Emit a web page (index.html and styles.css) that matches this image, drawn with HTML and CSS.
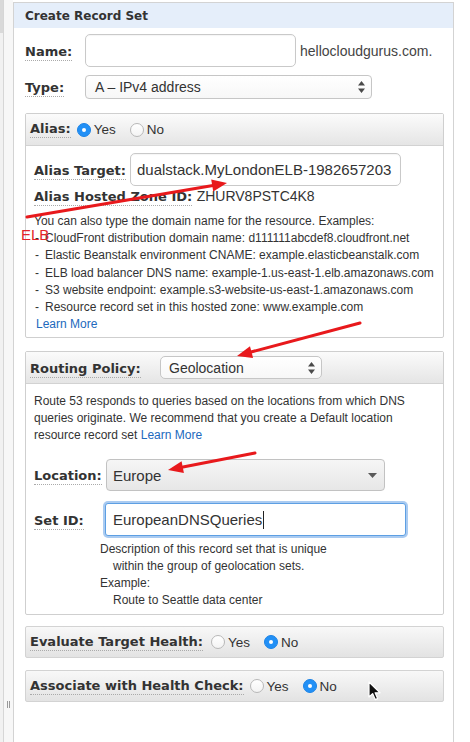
FILE: index.html
```html
<!DOCTYPE html>
<html>
<head>
<meta charset="utf-8">
<title>Create Record Set</title>
<link rel="stylesheet" href="styles.css">
</head>
<body>
<div class="page">
  <div class="gutter">
    <div class="gutter-edge"><div class="gutter-edge-top"></div></div>
    <div class="gutter-main"><span class="grip"></span></div>
  </div>
  <div class="panel">
    <div class="panel-head">Create Record Set</div>
    <div class="panel-body">
      <div class="row row-name">
        <div class="cell w60"><span class="lbl">Name:</span></div>
        <div class="input name-input"></div>
        <span class="suffix">hellocloudgurus.com.</span>
      </div>
      <div class="row row-type">
        <div class="cell w60"><span class="lbl">Type:</span></div>
        <div class="select type-select">
          <span>A – IPv4 address</span>
          <svg class="updown" width="7" height="12" viewBox="0 0 7 12"><path d="M3.5 0 L7 4.5 H0 Z M0 7.5 H7 L3.5 12 Z" fill="#4a4a4a"/></svg>
        </div>
      </div>

      <section class="box alias-box">
        <div class="box-head">
          <span class="lbl">Alias:</span>
          <span class="radio on first"></span><span class="rtext">Yes</span>
          <span class="radio"></span><span class="rtext">No</span>
        </div>
        <div class="box-body">
          <div class="row alias-row">
            <div class="cell w96"><span class="lbl">Alias Target:</span></div>
            <div class="input alias-input">dualstack.MyLondonELB-1982657203</div>
          </div>
          <div class="zone"><span class="lbl">Alias Hosted Zone ID:</span> <span class="zone-val">ZHURV8PSTC4K8</span></div>
          <div class="help">
            <div>You can also type the domain name for the resource. Examples:</div>
            <ul class="examples">
              <li><span class="dash">-</span>CloudFront distribution domain name: d111111abcdef8.cloudfront.net</li>
              <li><span class="dash">-</span>Elastic Beanstalk environment CNAME: example.elasticbeanstalk.com</li>
              <li><span class="dash">-</span>ELB load balancer DNS name: example-1.us-east-1.elb.amazonaws.com</li>
              <li><span class="dash">-</span>S3 website endpoint: example.s3-website-us-east-1.amazonaws.com</li>
              <li><span class="dash">-</span>Resource record set in this hosted zone: www.example.com</li>
            </ul>
            <a class="link learn1">Learn More</a>
          </div>
        </div>
      </section>

      <section class="box routing-box">
        <div class="box-head">
          <div class="cell w130"><span class="lbl">Routing Policy:</span></div>
          <div class="select policy-select">
            <span>Geolocation</span>
            <svg class="updown" width="7" height="12" viewBox="0 0 7 12"><path d="M3.5 0 L7 4.5 H0 Z M0 7.5 H7 L3.5 12 Z" fill="#4a4a4a"/></svg>
          </div>
        </div>
        <div class="box-body routing-body">
          <div class="desc">Route 53 responds to queries based on the locations from which DNS queries originate. We recommend that you create a Default location resource record set <a class="link">Learn More</a></div>
          <div class="row loc-row">
            <div class="cell w72"><span class="lbl">Location:</span></div>
            <div class="dropdown">
              <span>Europe</span>
              <svg width="9" height="5" viewBox="0 0 9 5"><path d="M0 0 H9 L4.5 5 Z" fill="#5a5a5a"/></svg>
            </div>
          </div>
          <div class="row setid-row">
            <div class="cell w71"><span class="lbl">Set ID:</span></div>
            <div class="input focus-input">EuropeanDNSQueries<span class="caret"></span></div>
          </div>
          <div class="setid-help">
            <div>Description of this record set that is unique</div>
            <div class="ind">within the group of geolocation sets.</div>
            <div>Example:</div>
            <div class="ind">Route to Seattle data center</div>
          </div>
        </div>
      </section>

      <div class="bar eval-bar">
        <span class="lbl">Evaluate Target Health:</span>
        <span class="radio first"></span><span class="rtext">Yes</span>
        <span class="radio on"></span><span class="rtext">No</span>
      </div>
      <div class="bar assoc-bar">
        <span class="lbl">Associate with Health Check:</span>
        <span class="radio first"></span><span class="rtext">Yes</span>
        <span class="radio on"></span><span class="rtext">No</span>
      </div>
    </div>
  </div>
</div>

<span class="elb-note">ELB</span>

<svg class="annotations" width="470" height="742" viewBox="0 0 470 742">
  <g stroke="#e8191c" stroke-width="3" stroke-linecap="round" fill="none">
    <line x1="27" y1="217" x2="213" y2="185.5"/>
    <line x1="360" y1="323" x2="251" y2="352"/>
    <line x1="255" y1="453" x2="183" y2="467"/>
  </g>
  <g fill="#e8191c">
    <polygon points="227,183 213.2,191.4 211.2,179.6"/>
    <polygon points="237,356 253.1,357.9 250.0,346.3"/>
    <polygon points="168,470 183.9,473.0 181.6,461.2"/>
  </g>
</svg>

<svg class="cursor" width="14" height="21" viewBox="0 0 14 21">
  <path d="M1 1 L1 16 L4.6 12.6 L7.2 18.6 L9.6 17.6 L7.1 11.8 L12 11.8 Z" fill="#111" stroke="#fff" stroke-width="1.2" stroke-linejoin="round"/>
</svg>
</body>
</html>
```

FILE: styles.css
```css
* { box-sizing: border-box; }

html, body {
  margin: 0;
  padding: 0;
}

body {
  width: 470px;
  height: 742px;
  overflow: hidden;
  position: relative;
  background: #fff;
  font-family: "Liberation Sans", Arial, sans-serif;
  color: #333;
}

.page {
  display: flex;
  height: 742px;
}

/* left gutter */
.gutter {
  width: 13px;
  flex: none;
  display: flex;
}
.gutter-edge {
  width: 3px;
  background: #f1f1f1;
}
.gutter-edge-top {
  height: 33px;
  background: #d9d9d9;
}
.gutter-main {
  flex: 1;
  border-left: 1px solid #d6d6d6;
  background: #f7f7f7;
  display: flex;
  flex-direction: column;
  justify-content: flex-end;
  align-items: center;
  padding-bottom: 34px;
}
.grip {
  width: 3px;
  height: 7px;
  border-left: 1px solid #999;
  border-right: 1px solid #999;
}

/* panel */
.panel {
  width: 441px;
  flex: none;
  margin-top: 2px;
  border: 1px solid #d3d3d3;
  border-bottom: none;
}
.panel-head {
  height: 25px;
  background: #e5eefa;
  padding-left: 11px;
  font: bold 12px "DejaVu Sans", sans-serif;
  line-height: 27px;
  color: #333;
}
.panel-body {
  padding: 0 9px 0 11px;
}

.row {
  display: flex;
  align-items: center;
}
.cell { flex: none; }
.w60 { width: 60px; }
.w96 { width: 96px; }
.w130 { width: 130px; }
.w72 { width: 72px; }
.w71 { width: 71px; }

.lbl {
  font: bold 13px "DejaVu Sans", sans-serif;
  color: #333;
  line-height: 15px;
  padding-bottom: 1px;
  border-bottom: 1px dotted #aaa;
  white-space: nowrap;
}

.input {
  background: #fff;
  border: 1px solid #c9c9c9;
  border-radius: 5px;
  box-shadow: inset 0 1px 1px rgba(0,0,0,0.04);
  font-size: 15px;
  color: #333;
  display: flex;
  align-items: center;
  white-space: nowrap;
  overflow: hidden;
}

.row-name { margin-top: 6px; }
.name-input { width: 211px; height: 33px; }
.suffix {
  margin-left: 4px;
  font-size: 14px;
  color: #444;
}

.row-type { margin-top: 8px; }
.select {
  display: flex;
  align-items: center;
  justify-content: space-between;
  background: linear-gradient(#fff, #f7f7f7);
  border: 1px solid #c6c6c6;
  border-radius: 4px;
  font-size: 14px;
  color: #333;
  padding: 0 6px 0 9px;
}
.type-select { width: 287px; height: 24px; }

/* boxes */
.box {
  border: 1px solid #cfcfcf;
  border-radius: 2px;
  background: #fff;
}
.box-head {
  height: 32px;
  display: flex;
  align-items: center;
  padding-left: 4px;
  background: linear-gradient(#fbfbfb, #e5e5e5);
  border-bottom: 1px solid #d2d2d2;
}
.box-body {
  padding: 7px 8px 4px 8px;
}

.alias-box { margin-top: 14px; }

.radio {
  width: 14px;
  height: 14px;
  border-radius: 50%;
  flex: none;
  background: linear-gradient(#fff, #f3f3f3);
  border: 1px solid #b8b8b8;
  margin-left: 14px;
  display: flex;
  align-items: center;
  justify-content: center;
}
.radio.first { margin-left: 6px; }
.radio.on {
  background: #2290f6;
  border-color: #1c83e6;
}
.radio.on::after {
  content: "";
  width: 4px;
  height: 4px;
  border-radius: 50%;
  background: #fff;
}
.rtext {
  margin-left: 3px;
  font-size: 13.5px;
  color: #333;
}

.alias-input {
  width: 271px;
  height: 33px;
  padding-left: 6px;
}

.zone {
  line-height: 20px;
  height: 20px;
  white-space: nowrap;
}
.zone-val {
  font-size: 14px;
  color: #333;
}

.help {
  margin-top: 7px;
  font-size: 12px;
  line-height: 17.2px;
  color: #333;
}
.examples {
  list-style: none;
  margin: 0;
  padding: 0;
}
.examples li { white-space: nowrap; }
.dash {
  display: inline-block;
  width: 11px;
  padding-left: 1px;
}
.link {
  color: #2169bd;
  text-decoration: none;
}
.learn1 { padding-left: 2px; }

/* routing */
.routing-box { margin-top: 13px; }
.policy-select {
  width: 162px;
  height: 23px;
  border-radius: 5px;
  padding-left: 8px;
}
.routing-body {
  padding: 9px 8px 5px 8px;
}
.desc {
  font-size: 12px;
  line-height: 17px;
  color: #333;
}
.loc-row { margin-top: 15px; }
.dropdown {
  width: 279px;
  height: 32px;
  display: flex;
  align-items: center;
  justify-content: space-between;
  padding: 0 7px 0 6px;
  border: 1px solid #c2c2c2;
  border-radius: 4px;
  background: linear-gradient(#f6f6f6, #e7e7e7);
  font-size: 15px;
  color: #333;
}
.setid-row { margin-top: 12px; }
.focus-input {
  width: 301px;
  height: 33px;
  padding-left: 7px;
  border: 1px solid #5d9fe3;
  border-radius: 3px;
  box-shadow: 0 0 0 2px rgba(100,160,230,0.55);
}
.caret {
  display: inline-block;
  width: 1px;
  height: 18px;
  background: #222;
  margin-left: 1px;
}
.setid-help {
  margin: 5px 0 0 66px;
  font-size: 12px;
  line-height: 17px;
  color: #333;
}
.setid-help .ind { padding-left: 13px; }

/* bars */
.bar {
  height: 32px;
  display: flex;
  align-items: center;
  padding-left: 4px;
  border: 1px solid #d3d3d3;
  border-radius: 2px;
  background: linear-gradient(#f8f8f8, #e3e3e3);
}
.eval-bar { margin-top: 11px; }
.eval-bar .radio.first { margin-left: 8px; }
.assoc-bar { margin-top: 12px; }

/* overlays */
.annotations {
  position: absolute;
  left: 0;
  top: 0;
  pointer-events: none;
}
.elb-note {
  position: absolute;
  left: 21px;
  top: 226px;
  font-size: 15px;
  color: #e3232a;
  font-family: "Liberation Sans", Arial, sans-serif;
}
.cursor {
  position: absolute;
  left: 368px;
  top: 681px;
}
```
